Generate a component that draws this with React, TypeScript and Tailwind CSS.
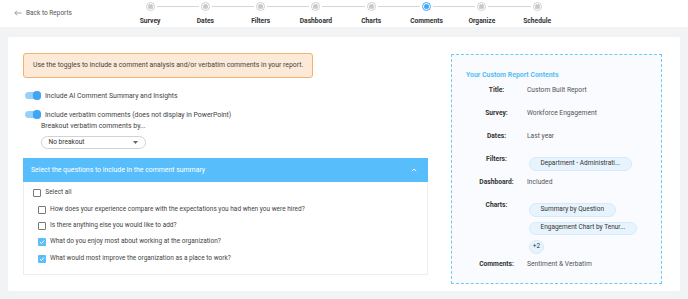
import React from "react";

const steps = ["Survey", "Dates", "Filters", "Dashboard", "Charts", "Comments", "Organize", "Schedule"];
const activeIdx = 5;

function Step({ label, i }: { label: string; i: number }) {
  const active = i === activeIdx;
  return (
    <div className="w-[55.3px] flex flex-col items-center">
      <div className="w-full flex items-center h-[9px]">
        <div className={`flex-1 h-px mr-[2px] ${i === 0 ? "" : "bg-[#d6d6d6]"}`} />
        <div
          className={`w-[9px] h-[9px] rounded-full border flex items-center justify-center bg-white ${
            active ? "border-[#3ea8f6]" : "border-[#cfcfcf]"
          }`}
        >
          <div className={`w-[5px] h-[5px] rounded-full ${active ? "bg-[#3ea8f6]" : "bg-[#c9c9c9]"}`} />
        </div>
        <div className={`flex-1 h-px ml-[2px] ${i === steps.length - 1 ? "" : "bg-[#d6d6d6]"}`} />
      </div>
      <div className="mt-[4.5px] text-[6.7px] leading-[10px] font-bold text-[#333]">{label}</div>
    </div>
  );
}

function Toggle() {
  return (
    <div className="w-[16px] h-[7.5px] rounded-full bg-[#96d1fb] flex items-center justify-end">
      <div className="w-[8.5px] h-[8.5px] rounded-full bg-[#3ea6f5] shadow-[0_0_1px_rgba(0,0,0,0.25)]" />
    </div>
  );
}

function Checkbox({ checked }: { checked?: boolean }) {
  if (checked) {
    return (
      <div className="w-[8px] h-[8px] rounded-[1px] bg-[#5dbdf9] flex items-center justify-center">
        <svg width="6" height="6" viewBox="0 0 10 10">
          <path d="M1.5 5.2 L4 7.5 L8.5 2.5" fill="none" stroke="white" strokeWidth="1.6" />
        </svg>
      </div>
    );
  }
  return <div className="w-[8px] h-[8px] rounded-[1px] border border-[#777] bg-white" />;
}

function Chip({ children }: { children: React.ReactNode }) {
  return (
    <div className="self-start h-[13.5px] flex items-center px-[10.5px] rounded-full bg-[#e7f3fd] border border-[#d7eafb] text-[6.5px] text-[#333]">
      {children}
    </div>
  );
}

function Row({ label, children, chips }: { label: string; children: React.ReactNode; chips?: boolean }) {
  return (
    <div className="flex items-start min-h-[23px]">
      <div className="w-[61px] text-center text-[6.7px] leading-[10px] font-bold text-[#333]">{label}</div>
      <div className={`flex-1 ${chips ? "pt-[3px] pb-[5px] pl-[2px] flex flex-col gap-[5px]" : "text-[6.7px] leading-[10px] text-[#555]"}`}>
        {children}
      </div>
    </div>
  );
}

const questions: [string, boolean][] = [
  ["How does your experience compare with the expectations you had when you were hired?", false],
  ["Is there anything else you would like to add?", false],
  ["What do you enjoy most about working at the organization?", true],
  ["What would most improve the organization as a place to work?", true],
];

export default function App() {
  return (
    <div className="w-[688px] h-[299px] bg-[#f2f3f5] font-['Roboto',sans-serif] overflow-hidden">
      <header className="h-[27px] bg-white flex items-start">
        <div className="w-[122.4px] flex items-center pl-[14px] pt-[8px] text-[#555]">
          <svg width="8" height="6" viewBox="0 0 8 6" className="mr-[4px]">
            <path d="M7.5 3 H1 M3 0.8 L0.8 3 L3 5.2" fill="none" stroke="#888" strokeWidth="0.8" />
          </svg>
          <span className="text-[6.5px] leading-[10px]">Back to Reports</span>
        </div>
        <div className="flex pt-[2.2px]">
          {steps.map((s, i) => (
            <Step key={s} label={s} i={i} />
          ))}
        </div>
      </header>

      <div className="px-[8px] pt-[10px]">
        <div className="bg-white h-[254px] rounded-[2px] flex pl-[15px] pr-[18px] pt-[16px] pb-[7px] gap-[23px]">
          {/* left column */}
          <div className="w-[405px] flex flex-col">
            <div className="self-start h-[25px] flex items-center px-[9px] border border-[#f5b46c] bg-[#fce9d7] rounded-[3px] text-[6.85px] text-[#444]">
              Use the toggles to include a comment analysis and/or verbatim comments in your report.
            </div>

            <div className="mt-[12.7px] flex items-center h-[10px] pl-[2px]">
              <Toggle />
              <span className="ml-[4px] text-[6.9px] text-[#444]">Include AI Comment Summary and Insights</span>
            </div>
            <div className="mt-[9px] flex items-center h-[10px] pl-[2px]">
              <Toggle />
              <span className="ml-[4px] text-[6.9px] text-[#444]">Include verbatim comments (does not display in PowerPoint)</span>
            </div>
            <div className="mt-[1px] pl-[18px] text-[6.9px] leading-[10px] text-[#444]">Breakout verbatim comments by...</div>
            <div className="ml-[18px] mt-[5.5px] w-[105px] h-[13px] rounded-full border border-[#d2d2d2] flex items-center justify-between pl-[6.5px] pr-[7px]">
              <span className="text-[6.6px] text-[#333]">No breakout</span>
              <svg width="5" height="3" viewBox="0 0 5 3">
                <path d="M0 0 H5 L2.5 3 Z" fill="#666" />
              </svg>
            </div>

            <div className="mt-[9px] h-[23.5px] bg-[#58bdfb] flex items-center justify-between pl-[8px] pr-[11px]">
              <span className="text-[6.9px] text-white">Select the questions to include in the comment summary</span>
              <svg width="6" height="4" viewBox="0 0 6 4">
                <path d="M0.8 3.2 L3 1 L5.2 3.2" fill="none" stroke="white" strokeWidth="1" />
              </svg>
            </div>
            <div className="border border-t-0 border-[#eeeeee] pt-[3.5px] pb-[7px] pl-[9px]">
              <div className="h-[16.3px] flex items-center">
                <Checkbox />
                <span className="ml-[4.3px] text-[6.5px] text-[#444]">Select all</span>
              </div>
              {questions.map(([q, c]) => (
                <div key={q} className="h-[16.3px] flex items-center pl-[5px]">
                  <Checkbox checked={c} />
                  <span className="ml-[4px] text-[6.5px] text-[#444]">{q}</span>
                </div>
              ))}
            </div>
          </div>

          {/* right card */}
          <div className="mt-[1px] w-[211px] h-[230px] border border-dashed border-[#6ccaf9] bg-[#f9fbfe] pt-[15px] px-[14px]">
            <div className="text-[6.9px] leading-[10px] font-bold text-[#56bdf8]">Your Custom Report Contents</div>
            <div className="mt-[5px] flex flex-col">
              <Row label="Title:">Custom Built Report</Row>
              <Row label="Survey:">Workforce Engagement</Row>
              <Row label="Dates:">Last year</Row>
              <Row label="Filters:" chips>
                <Chip>Department - Administrati...</Chip>
              </Row>
              <Row label="Dashboard:">Included</Row>
              <Row label="Charts:" chips>
                <Chip>Summary by Question</Chip>
                <Chip>Engagement Chart by Tenur...</Chip>
                <div className="self-start h-[13.5px] w-[15px] flex items-center justify-center rounded-full bg-[#e7f3fd] border border-[#d7eafb] text-[6.5px] text-[#333]">
                  +2
                </div>
              </Row>
              <Row label="Comments:">Sentiment &amp; Verbatim</Row>
            </div>
          </div>
        </div>
      </div>
    </div>
  );
}
